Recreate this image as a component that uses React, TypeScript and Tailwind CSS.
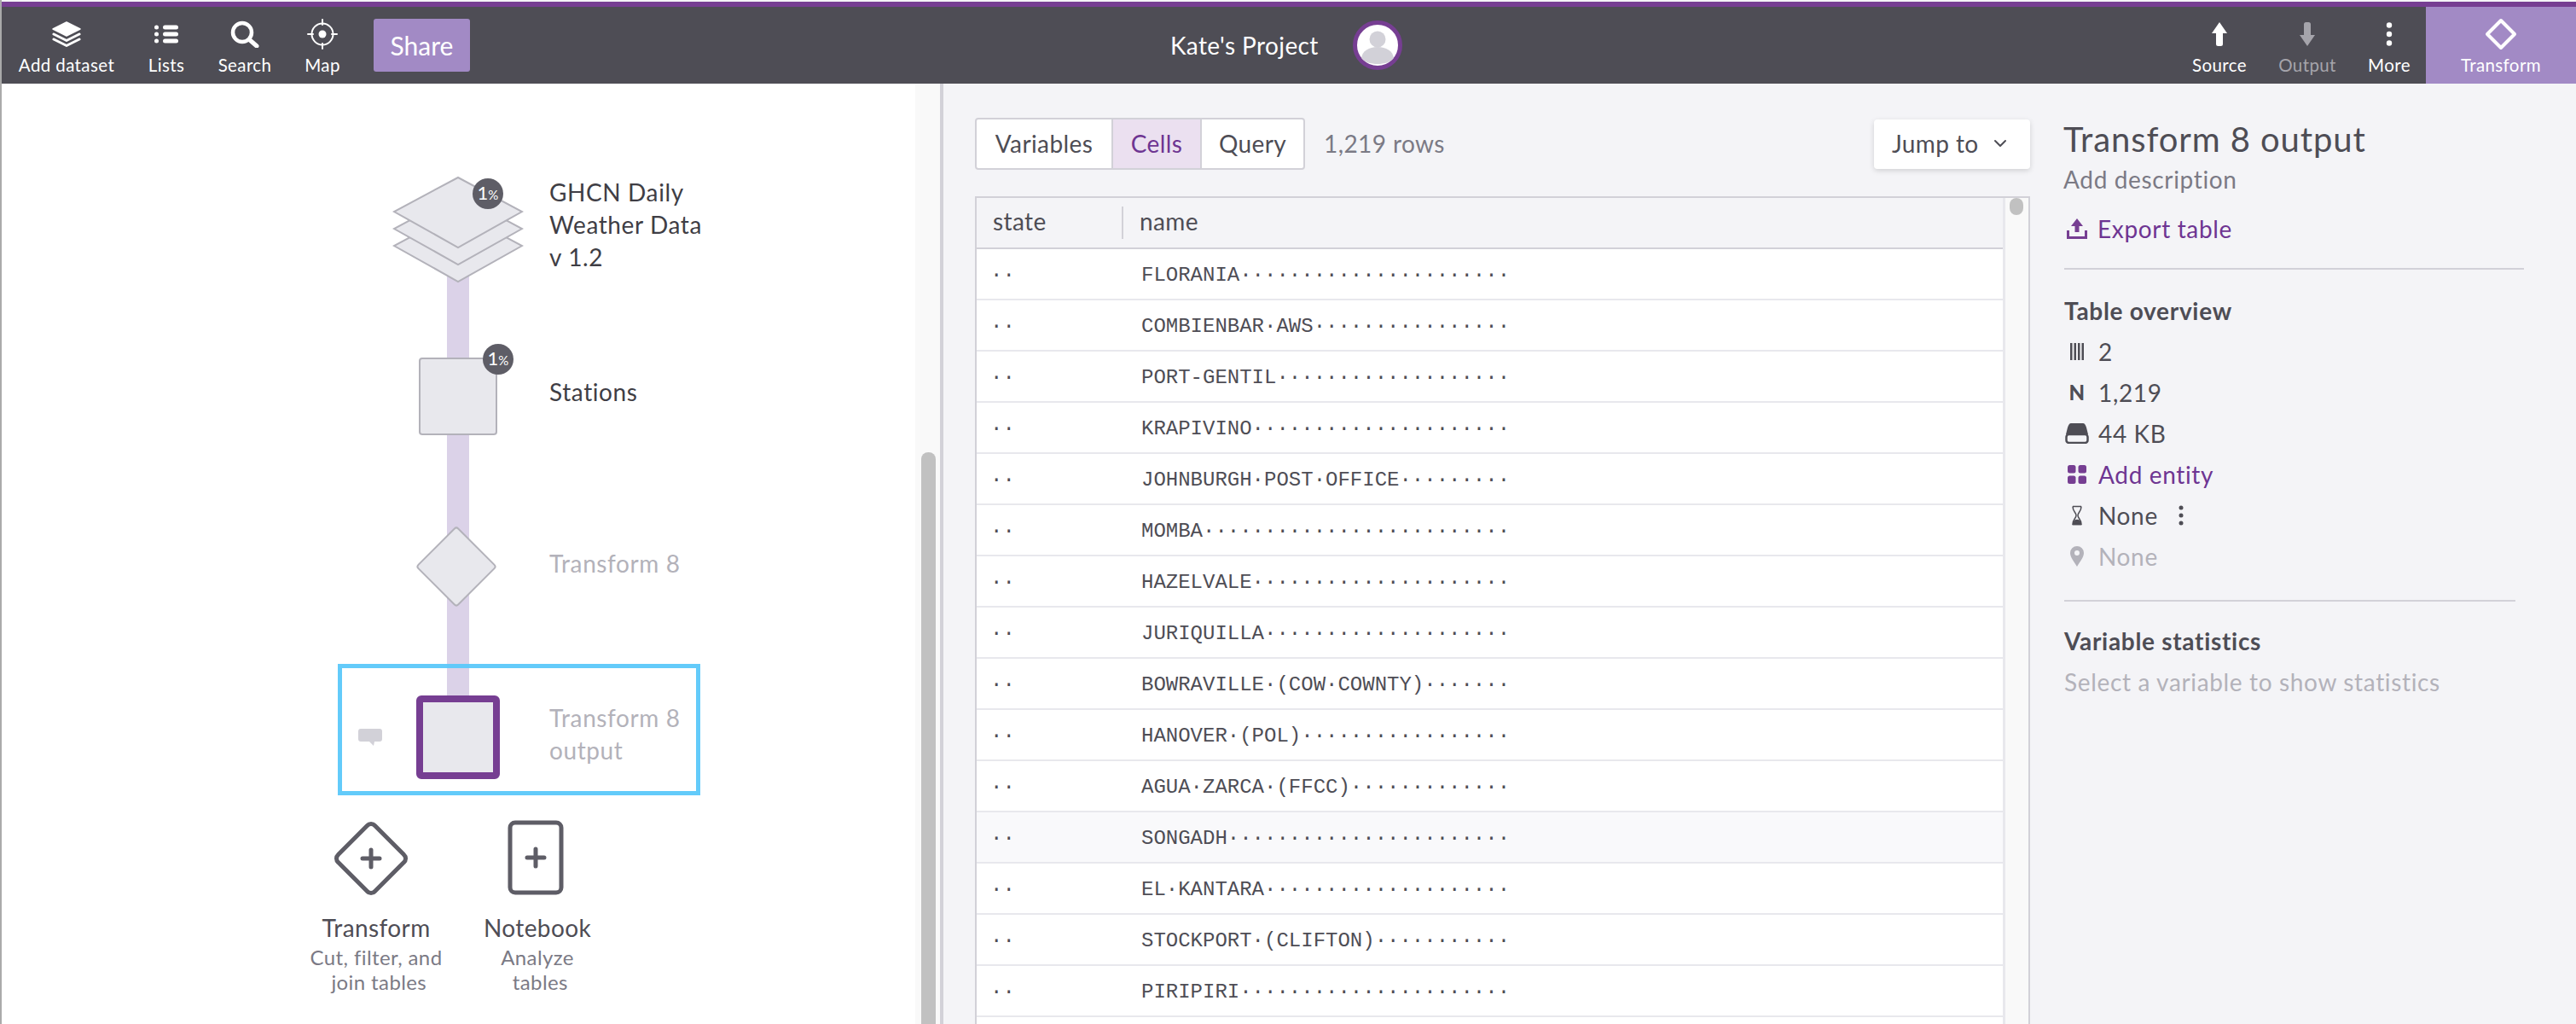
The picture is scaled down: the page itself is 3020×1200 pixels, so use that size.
import React from "react";

const names = [
  "FLORANIA",
  "COMBIENBAR AWS",
  "PORT-GENTIL",
  "KRAPIVINO",
  "JOHNBURGH POST OFFICE",
  "MOMBA",
  "HAZELVALE",
  "JURIQUILLA",
  "BOWRAVILLE (COW COWNTY)",
  "HANOVER (POL)",
  "AGUA ZARCA (FFCC)",
  "SONGADH",
  "EL KANTARA",
  "STOCKPORT (CLIFTON)",
  "PIRIPIRI",
];

function dotted(name: string) {
  return name.replace(/ /g, "·").padEnd(30, "·");
}

function Tool({ label, width, muted, children }: { label: string; width: string; muted?: boolean; children: React.ReactNode }) {
  return (
    <div className={`${width} flex flex-col items-center pt-[13px] shrink-0`}>
      <div className="h-[38px] flex items-center justify-center">{children}</div>
      <span className={`mt-[3px] text-[20.5px] leading-[28px] whitespace-nowrap ${muted ? "text-[#a5a4ab]" : "text-white"}`}>{label}</span>
    </div>
  );
}

function Header() {
  return (
    <header className="h-[90px] flex bg-[#4e4d55] shrink-0">
      {/* left tools */}
      <div className="w-[1372px] shrink-0 flex pl-[16px]">
        <Tool label="Add dataset" width="w-[124px]">
          <svg width="36" height="30" viewBox="0 0 36 30" fill="none">
            <path d="M18 1 34 9 18 17 2 9Z" fill="white" stroke="white" strokeWidth="1.5" strokeLinejoin="round" />
            <path d="M3 15 18 22.500 33 15M3 21 18 28.500 33 21" stroke="white" strokeWidth="3" strokeLinecap="round" strokeLinejoin="round" />
          </svg>
        </Tool>
        <Tool label="Lists" width="w-[110px]">
          <svg width="30" height="22" viewBox="0 0 30 22" fill="white">
            <circle cx="3.500" cy="3" r="2.500" />
            <circle cx="3.500" cy="11" r="2.500" />
            <circle cx="3.500" cy="19" r="2.500" />
            <rect x="11" y="0.500" width="18" height="5" rx="2.500" />
            <rect x="11" y="8.500" width="18" height="5" rx="2.500" />
            <rect x="11" y="16.500" width="18" height="5" rx="2.500" />
          </svg>
        </Tool>
        <Tool label="Search" width="w-[74px]">
          <svg width="34" height="32" viewBox="0 0 34 32" fill="none" stroke="white">
            <circle cx="14" cy="14" r="11" strokeWidth="4.500" />
            <path d="M23 23 31 30" strokeWidth="5" strokeLinecap="round" />
          </svg>
        </Tool>
        <Tool label="Map" width="w-[108px]">
          <svg width="36" height="36" viewBox="0 0 36 36" fill="none" stroke="white">
            <circle cx="18" cy="18" r="12.500" strokeWidth="2" />
            <circle cx="18" cy="18" r="4.500" fill="white" stroke="none" />
            <path d="M18 1v6M18 29v6M1 18h6M29 18h6" strokeWidth="2" strokeLinecap="round" />
          </svg>
        </Tool>
        <button className="ml-[6px] mt-[14px] w-[113px] h-[62px] rounded-[3px] bg-[#a28ac5] text-white text-[30px] tracking-normal">Share</button>
      </div>

      {/* project */}
      <div className="flex-1 flex items-center text-white text-[28px]">
        <span>Kate's Project</span>
        <svg className="ml-[40px]" width="58" height="58" viewBox="0 0 58 58">
          <circle cx="29" cy="29" r="26.500" fill="white" stroke="#763e92" strokeWidth="5" />
          <circle cx="29" cy="22" r="9.500" fill="#d2d1d8" />
          <path d="M10 44c1-8 9-13 19-13s18 5 19 13c-4 5-11 7-19 7s-15-2-19-7Z" fill="#d2d1d8" />
        </svg>
      </div>

      {/* right tools */}
      <div className="flex">
        <Tool label="Source" width="w-[100px]">
          <svg width="20" height="30" viewBox="0 0 20 30" fill="white">
            <path d="M10 1 19 14H14V26.500a2.500 2.500 0 0 1-2.500 2.500h-3A2.500 2.500 0 0 1 6 26.500V14H1Z" />
          </svg>
        </Tool>
        <Tool label="Output" width="w-[106px]" muted>
          <svg width="20" height="30" viewBox="0 0 20 30" fill="#a5a4ab">
            <path d="M10 29 19 16H14V3.500A2.500 2.500 0 0 0 11.500 1h-3A2.500 2.500 0 0 0 6 3.500V16H1Z" />
          </svg>
        </Tool>
        <Tool label="More" width="w-[86px]">
          <svg width="8" height="30" viewBox="0 0 8 30" fill="white">
            <circle cx="4" cy="4.500" r="3.200" />
            <circle cx="4" cy="15" r="3.200" />
            <circle cx="4" cy="25.500" r="3.200" />
          </svg>
        </Tool>
        <div className="bg-[#a28ac5]">
          <Tool label="Transform" width="w-[176px]">
            <svg width="38" height="38" viewBox="0 0 38 38" fill="none">
              <path d="M19 3 35 19 19 35 3 19Z" stroke="white" strokeWidth="4" strokeLinejoin="round" />
            </svg>
          </Tool>
        </div>
      </div>
    </header>
  );
}

function Badge({ className }: { className: string }) {
  return (
    <div className={`absolute w-[36px] h-[36px] rounded-full bg-[#5e5d66] text-white flex items-baseline justify-center pt-[3px] tracking-normal ${className}`}>
      <span className="text-[22px] leading-[28px]">1</span>
      <span className="text-[15px] leading-[28px]">%</span>
    </div>
  );
}

function AddItem({ width, sub, title, children }: { width: string; title: string; sub: React.ReactNode; children: React.ReactNode }) {
  return (
    <div className={`${width} flex flex-col items-center text-center`}>
      {children}
      <div className="mt-[18px] text-[28px] leading-[36px] text-[#4e4d55]">{title}</div>
      <div className="mt-[2px] text-[24px] leading-[29px] text-[#7b7a85]">{sub}</div>
    </div>
  );
}

function Canvas() {
  return (
    <aside className="relative w-[1073px] shrink-0 bg-white text-[28px] leading-[38px] text-[#3f3e45] tracking-[0.6px]">
      {/* connector */}
      <div className="absolute left-[524px] top-[220px] w-[26px] h-[500px] bg-[#dbd2e8]" />

      {/* dataset node */}
      <svg className="absolute left-[460px] top-[108px]" width="154" height="126" viewBox="0 0 154 126">
        <path d="M77 42 152 82 77 124 2 82Z" fill="#e8e8ed" stroke="#b3b2ba" strokeWidth="2" />
        <path d="M77 22 152 62 77 104 2 62Z" fill="#e8e8ed" stroke="#b3b2ba" strokeWidth="2" />
        <path d="M77 2 152 42 77 84 2 42Z" fill="#e8e8ed" stroke="#b3b2ba" strokeWidth="2" />
      </svg>
      <Badge className="left-[554px] top-[111px]" />
      <div className="absolute left-[644px] top-[108px]">
        GHCN Daily
        <br />
        Weather Data
        <br />v 1.2
      </div>

      {/* stations */}
      <div className="absolute left-[491px] top-[321px] w-[92px] h-[91px] rounded-[4px] border-2 border-[#b3b2ba] bg-[#e8e8ed]" />
      <Badge className="left-[566px] top-[305px]" />
      <div className="absolute left-[644px] top-[342px]">Stations</div>

      {/* transform */}
      <div className="absolute left-[501px] top-[532px] w-[68px] h-[68px] rotate-45 rounded-[4px] border-2 border-[#b3b2ba] bg-[#e8e8ed]" />
      <div className="absolute left-[644px] top-[543px] text-[#b3b2ba]">Transform 8</div>

      {/* selected output */}
      <div className="absolute left-[396px] top-[680px] w-[425px] h-[154px] border-[5px] border-[#5bc8fa]/95" />
      <div className="absolute left-[488px] top-[717px] w-[98px] h-[98px] rounded-[6px] border-[8px] border-[#763e92] bg-[#e8e8ed]" />
      <svg className="absolute left-[420px] top-[756px]" width="28" height="20" viewBox="0 0 28 20" fill="#d2d1d8">
        <path d="M3 0h22a3 3 0 0 1 3 3v9a3 3 0 0 1-3 3h-6l-1 5-5-5H3a3 3 0 0 1-3-3V3a3 3 0 0 1 3-3Z" />
      </svg>
      <div className="absolute left-[644px] top-[724px] text-[#b3b2ba]">
        Transform 8
        <br />
        output
      </div>

      {/* add menu */}
      <div className="absolute left-[350px] top-[863px] flex tracking-[0.4px]">
        <AddItem
          width="w-[182px]"
          title="Transform"
          sub={
            <>
              Cut, filter, and
              <br />
              &nbsp;join tables
            </>
          }
        >
          <svg className="mr-[12px]" width="90" height="90" viewBox="0 0 90 90" fill="none" stroke="#5e5d66" strokeWidth="5" strokeLinecap="round" strokeLinejoin="round">
            <path d="M40.500 6.500a6 6 0 0 1 9 0L83.500 40.500a6 6 0 0 1 0 9L49.500 83.500a6 6 0 0 1-9 0L6.500 49.500a6 6 0 0 1 0-9Z" />
            <path d="M45 35v20M35 45h20" />
          </svg>
        </AddItem>
        <AddItem
          width="w-[196px]"
          title="Notebook"
          sub={
            <>
              Analyze
              <br />
              &nbsp;tables
            </>
          }
        >
          <svg className="mr-[4px]" width="90" height="90" viewBox="0 0 90 90" fill="none" stroke="#5e5d66" strokeWidth="5" strokeLinecap="round" strokeLinejoin="round">
            <rect x="15" y="3" width="60" height="82" rx="6" />
            <path d="M45 34v20M35 44h20" />
          </svg>
        </AddItem>
      </div>
    </aside>
  );
}

function DataTable() {
  return (
    <div className="mt-[31px] flex-1 min-h-0 overflow-hidden flex border-x-2 border-t-2 border-[#d2d1d8] bg-white">
      <div className="flex-1 min-w-0">
        <div className="h-[60px] flex items-center bg-[#f4f4f7] border-b-2 border-[#d2d1d8] text-[28px] text-[#4e4d55]">
          <div className="w-[172px] pl-[19px] border-r-2 border-[#d2d1d8] h-[38px] leading-[34px]">state</div>
          <div className="pl-[19px] leading-[34px] pb-[4px]">name</div>
        </div>
        {names.map((name) => (
          <div
            key={name}
            className={`h-[60px] flex items-center pt-[3px] border-b-2 border-[#e8e8ed] font-['Liberation_Mono',monospace] text-[24px] tracking-normal text-[#4e4d55] ${name === "SONGADH" ? "bg-[#f9f9fb]" : ""}`}
          >
            <div className="w-[172px] pl-[16px]">··</div>
            <div className="pl-[21px] whitespace-pre">{dotted(name)}</div>
          </div>
        ))}
      </div>
      <div className="w-[30px] shrink-0 border-l-[3px] border-[#e8e8ed] bg-[#f9f9f9] pl-[5px]">
        <div className="w-[16px] h-[20px] rounded-full bg-[#c1c1c1]" />
      </div>
    </div>
  );
}

function StatRow({ icon, children, className = "" }: { icon: React.ReactNode; children: React.ReactNode; className?: string }) {
  return (
    <div className={`h-[48px] flex items-center ${className}`}>
      <div className="w-[36px] flex justify-center">{icon}</div>
      <div className="ml-[7px] flex items-center">{children}</div>
    </div>
  );
}

function Details() {
  return (
    <div className="w-[566px] shrink-0 pt-[39px] pr-[37px] text-[#4e4d55] tracking-[0.65px]">
      <h1 className="ml-[2px] text-[40px] leading-[52px] tracking-[0.9px]">Transform 8 output</h1>
      <p className="ml-[2px] mt-[3px] text-[28px] leading-[36px] text-[#7b7a85]">Add description</p>
      <div className="mt-[20px] h-[40px] flex items-center text-[28px] text-[#6e3592]">
        <svg className="ml-[6px]" width="24" height="24" viewBox="0 0 24 24" fill="#763e92">
          <path d="M12 0 19 9H14.500V16H9.500V9H5Z" />
          <path d="M1.500 14V22.500H22.500V14" fill="none" stroke="#763e92" strokeWidth="3" />
        </svg>
        <span className="ml-[12px]">Export table</span>
      </div>
      <div className="mt-[26px] h-[2px] w-[539px] ml-[3px] bg-[#d2d1d8]" />
      <h2 className="mt-[30px] ml-[3px] text-[28px] leading-[36px] font-bold tracking-[0.7px]">Table overview</h2>
      <div className="mt-[6px] text-[28px]">
        <StatRow
          icon={
            <svg width="18" height="22" viewBox="0 0 18 22" fill="#4e4d55">
              <rect x="1" y="1" width="2.500" height="20" />
              <rect x="5.500" y="1" width="2.500" height="20" />
              <rect x="10" y="1" width="2.500" height="20" />
              <rect x="14.500" y="1" width="2.500" height="20" />
            </svg>
          }
        >
          2
        </StatRow>
        <StatRow icon={<span className="text-[24px] font-black leading-none">N</span>}>1,219</StatRow>
        <StatRow
          icon={
            <svg width="28" height="24" viewBox="0 0 28 24" fill="#4e4d55">
              <path d="M7 0H21C23 0 24 2 25 5L27 13H1L3 5C4 2 5 0 7 0Z" />
              <rect x="1.500" y="13" width="25" height="10" rx="3" fill="none" stroke="#4e4d55" strokeWidth="2.500" />
            </svg>
          }
        >
          44 KB
        </StatRow>
        <StatRow
          className="text-[#6e3592]"
          icon={
            <svg width="22" height="22" viewBox="0 0 22 22" fill="#763e92">
              <rect x="0" y="0" width="9.500" height="9.500" rx="2.500" />
              <rect x="12.500" y="0" width="9.500" height="9.500" rx="2.500" />
              <rect x="0" y="12.500" width="9.500" height="9.500" rx="2.500" />
              <rect x="12.500" y="12.500" width="9.500" height="9.500" rx="2.500" />
            </svg>
          }
        >
          Add entity
        </StatRow>
        <StatRow
          icon={
            <svg width="16" height="24" viewBox="0 0 16 24" fill="none" stroke="#4e4d55" strokeWidth="1.500">
              <path d="M3 1.500h10M3 1.500c0 6 4 7 4 10.500s-4 4.500-4 10.500h10c0-6-4-7-4-10.500s4-4.500 4-10.500" strokeLinejoin="round" />
              <path d="M3.500 22.500c.5-3 2.500-5 4.500-5s4 2 4.500 5Z" fill="#4e4d55" />
            </svg>
          }
        >
          None
          <svg className="ml-[24px]" width="6" height="24" viewBox="0 0 6 24" fill="#4e4d55">
            <circle cx="3" cy="3" r="2.500" />
            <circle cx="3" cy="12" r="2.500" />
            <circle cx="3" cy="21" r="2.500" />
          </svg>
        </StatRow>
        <StatRow
          className="text-[#b3b2ba]"
          icon={
            <svg width="16" height="24" viewBox="0 0 16 24" fill="#b3b2ba">
              <path fillRule="evenodd" d="M8 0a8 8 0 0 1 8 8c0 5-5 11-8 16C5 19 0 13 0 8a8 8 0 0 1 8-8Zm0 5a3 3 0 1 0 0 6 3 3 0 0 0 0-6Z" />
            </svg>
          }
        >
          None
        </StatRow>
      </div>
      <div className="mt-[27px] h-[2px] w-[529px] ml-[3px] bg-[#d2d1d8]" />
      <h2 className="mt-[28px] ml-[3px] text-[28px] leading-[36px] font-bold tracking-[0.7px]">Variable statistics</h2>
      <p className="mt-[12px] ml-[3px] text-[28px] leading-[36px] text-[#b3b2ba]">Select a variable to show statistics</p>
    </div>
  );
}

export default function App() {
  return (
    <div className="relative w-[3020px] h-[1200px] overflow-hidden flex flex-col bg-white font-['Lato',sans-serif] tracking-[0.4px]">
      <div className="h-[2px] shrink-0 bg-[#f4f4f7]" />
      <div className="h-[6px] shrink-0 bg-[#763e92]" />
      <Header />
      <div className="flex-1 min-h-0 flex">
        <Canvas />
        {/* canvas scrollbar */}
        <div className="w-[29px] shrink-0 bg-[#f9f9f9] pl-[7px] pt-[432px]">
          <div className="w-[17px] h-full bg-[#c1c1c1] rounded-t-[8px]" />
        </div>
        <div className="w-[4px] shrink-0 bg-[#d2d1d8]" />

        <main className="flex-1 min-w-0 flex bg-[#f4f4f7] pl-[37px]">
          <div className="w-[1237px] shrink-0 flex flex-col pt-[40px] mr-[37px]">
            <div className="h-[61px] flex justify-between shrink-0">
              <div className="flex items-center">
                <div className="flex h-[61px] border-2 border-[#d2d1d8] rounded-[4px] bg-white text-[28px] text-[#4e4d55] overflow-hidden">
                  <div className="w-[158px] pb-[2px] flex items-center justify-center">Variables</div>
                  <div className="w-[106px] pb-[2px] flex items-center justify-center border-x-2 border-[#d2d1d8] bg-[#ebe0f0] text-[#6e3592]">Cells</div>
                  <div className="w-[119px] pb-[2px] flex items-center justify-center">Query</div>
                </div>
                <span className="ml-[22px] pb-[2px] text-[28px] text-[#7b7a85]">1,219 rows</span>
              </div>
              <button className="mt-[2px] w-[183px] h-[58px] rounded-[4px] bg-white shadow-[0_2px_6px_rgba(0,0,0,0.15)] flex items-center pl-[21px] pb-[2px] text-[28px] text-[#4e4d55]">
                Jump to
                <svg className="ml-[17px]" width="16" height="10" viewBox="0 0 16 10" fill="none" stroke="#4e4d55" strokeWidth="2" strokeLinecap="round" strokeLinejoin="round">
                  <path d="M2 2 8 8 14 2" />
                </svg>
              </button>
            </div>
            <DataTable />
          </div>
          <Details />
        </main>
      </div>
      {/* window edge */}
      <div className="absolute left-0 top-0 bottom-0 w-[2px] bg-[#aaaaaa]" />
    </div>
  );
}
